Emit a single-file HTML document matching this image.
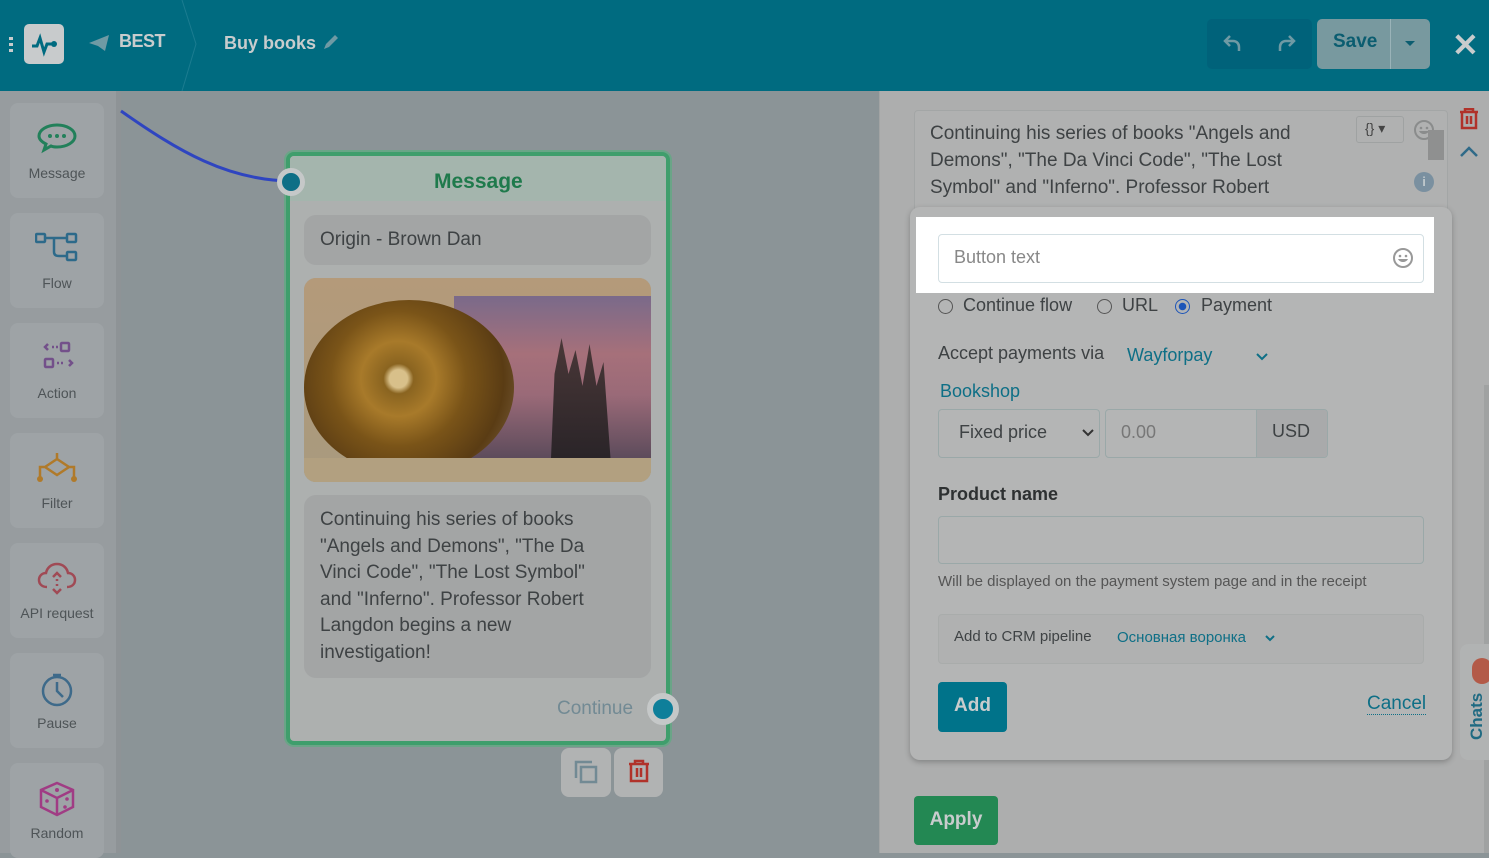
<!DOCTYPE html>
<html><head><meta charset="utf-8"><style>
*{box-sizing:border-box;margin:0;padding:0}
body{width:1489px;height:853px;overflow:hidden;font-family:"Liberation Sans",sans-serif;background:#8b9497;position:relative}
.abs{position:absolute}
.hdr{left:0;top:0;width:1489px;height:91px;background:#006b80}
.side{left:0;top:91px;width:121px;height:762px;background:#979c9f;border-right:5px solid #8e9396}
.item{position:absolute;left:10px;width:94px;height:95px;background:#9ea3a6;border-radius:8px;text-align:center;font-size:14px;color:#4e5457}
.item svg{display:block;margin:18px auto 8px}
.rp{left:879px;top:91px;width:610px;height:762px;background:#adaeae;border-left:1px solid #a2a4a4}
.t{color:#3e4244}
</style></head><body>
<div class="abs hdr"></div>
<div class="abs" style="left:9px;top:37px;width:4px;height:16px;background:repeating-linear-gradient(#c8cccd 0 3px,transparent 3px 6px)"></div>
<div class="abs" style="left:24px;top:24px;width:40px;height:40px;background:#c8cbcc;border-radius:5px"><svg width="40" height="40"><path d="M8 22h5l3-8 4 14 3-8h5" stroke="#006b80" stroke-width="3" fill="none"/><circle cx="30" cy="20" r="3" fill="#006b80"/></svg></div>
<svg class="abs" style="left:88px;top:34px" width="22" height="18"><path d="M1 9L21 1 17 17 10 12z" fill="#6f9aa4"/></svg>
<div class="abs" style="left:119px;top:31px;font-size:18px;font-weight:bold;color:#c8cccd;letter-spacing:-.5px">BEST</div>
<svg class="abs" style="left:180px;top:0" width="20" height="91"><path d="M2 0L16 44 2 91" stroke="#1b7c90" fill="none"/></svg>
<div class="abs" style="left:224px;top:33px;font-size:18px;font-weight:bold;color:#c8cccd">Buy books</div>
<svg class="abs" style="left:321px;top:34px" width="18" height="18"><path d="M3 15l2-5 9-9 3 3-9 9z" fill="#6f9aa4"/></svg>
<div class="abs" style="left:1207px;top:19px;width:105px;height:50px;background:#00627a;border-radius:5px"></div>
<svg class="abs" style="left:1222px;top:32px" width="22" height="22"><path d="M8 4L3 9l5 5M3 9h8c4 0 6 3 6 6v4" stroke="#6f9aa4" stroke-width="2.5" fill="none"/></svg>
<svg class="abs" style="left:1275px;top:32px" width="22" height="22"><path d="M14 4l5 5-5 5M19 9h-8c-4 0-6 3-6 6v4" stroke="#6f9aa4" stroke-width="2.5" fill="none"/></svg>
<div class="abs" style="left:1317px;top:19px;width:113px;height:50px;background:#78999f;border-radius:5px"></div>
<div class="abs" style="left:1390px;top:19px;width:1px;height:50px;background:#9ab3b8"></div>
<div class="abs" style="left:1333px;top:31px;font-size:19px;font-weight:bold;color:#0b5d70">Save</div>
<div class="abs" style="left:1405px;top:41px;border:5px solid transparent;border-top-color:#0b5d70"></div>
<div class="abs" style="left:1452px;top:26px;font-size:32px;font-weight:bold;color:#c8cccd">✕</div>

<div class="abs side">
<div class="item" style="top:12px"><svg width="44" height="36"><path d="M22 4c10 0 18 5 18 11s-8 11-18 11c-2 0-4 0-6-1l-7 4 2-6c-4-2-7-5-7-8C4 9 12 4 22 4z" stroke="#22805a" stroke-width="3" fill="none"/><circle cx="15" cy="15" r="2" fill="#22805a"/><circle cx="22" cy="15" r="2" fill="#22805a"/><circle cx="29" cy="15" r="2" fill="#22805a"/></svg>Message</div>
<div class="item" style="top:122px"><svg width="44" height="36"><g stroke="#2d6a8a" stroke-width="2.5" fill="none"><rect x="1" y="3" width="9" height="8" rx="1"/><rect x="32" y="3" width="9" height="8" rx="1"/><rect x="32" y="21" width="9" height="8" rx="1"/><path d="M10 7h22M19 7v14c0 3 2 4 5 4h8"/></g></svg>Flow</div>
<div class="item" style="top:232px"><svg width="44" height="36"><g stroke="#73508a" stroke-width="2.5" fill="none"><rect x="26" y="2" width="8" height="8" rx="1"/><rect x="10" y="18" width="8" height="8" rx="1"/><path d="M13 3l-3 3 3 3M34 19l3 3-3 3M17 6h2M21 6h2M22 22h2M26 22h2"/></g></svg>Action</div>
<div class="item" style="top:342px"><svg width="44" height="36"><g stroke="#b07a2a" stroke-width="2.5" fill="none"><path d="M22 2v6M22 8L10 16l12 8 12-8zM10 16H5v10M34 16h5v10"/></g><circle cx="5" cy="28" r="3" fill="#b07a2a"/><circle cx="39" cy="28" r="3" fill="#b07a2a"/></svg>Filter</div>
<div class="item" style="top:452px"><svg width="44" height="36"><g stroke="#a04a55" stroke-width="2.5" fill="none"><path d="M12 26c-5 0-8-3-8-7s3-7 7-7c1-5 5-9 11-9s10 4 11 9c4 0 7 3 7 7s-3 7-8 7"/><path d="M18 16l4-4 4 4M18 28l4 4 4-4M22 18v2M22 23v2"/></g></svg>API request</div>
<div class="item" style="top:562px"><svg width="44" height="36"><g stroke="#3e6a8a" stroke-width="2.5" fill="none"><circle cx="22" cy="20" r="14"/><path d="M18 4h8M22 11v9l6 6"/></g></svg>Pause</div>
<div class="item" style="top:672px"><svg width="44" height="36"><g stroke="#a03c84" stroke-width="2.5" fill="none"><path d="M22 2l16 7v17l-16 8-16-8V9zM6 9l16 8 16-8M22 17v17"/></g><circle cx="22" cy="9" r="2" fill="#a03c84"/><circle cx="12" cy="20" r="1.8" fill="#a03c84"/><circle cx="32" cy="18" r="1.8" fill="#a03c84"/><circle cx="30" cy="26" r="1.8" fill="#a03c84"/></svg>Random</div>
</div>

<svg class="abs" style="left:118px;top:91px" width="180" height="100"><path d="M3 20C60 60 110 90 175 90" stroke="#2f45c0" stroke-width="3" fill="none"/></svg>

<!-- node -->
<div class="abs" style="left:286px;top:152px;width:384px;height:593px;border:4px solid #3f9e6c;border-radius:8px;background:#adb0af;box-shadow:0 0 0 2px #6aa587"></div>
<div class="abs" style="left:290px;top:156px;width:376px;height:45px;background:#a4b5ad;border-radius:4px 4px 0 0"></div>
<div class="abs" style="left:434px;top:170px;font-size:21px;font-weight:bold;color:#1f7a4c">Message</div>
<div class="abs" style="left:277px;top:168px;width:28px;height:28px;border-radius:50%;background:#0e6f86;border:5px solid #c5c8c8"></div>
<div class="abs" style="left:304px;top:215px;width:347px;height:50px;background:#a3a5a5;border-radius:12px"></div>
<div class="abs t" style="left:320px;top:229px;font-size:19px">Origin - Brown Dan</div>
<div class="abs" style="left:304px;top:278px;width:347px;height:204px;border-radius:12px;overflow:hidden;background:#a89878">
 <div class="abs" style="left:0;top:0;width:347px;height:204px;background:linear-gradient(180deg,#b49a7a,#a89a7e)"></div>
 <div class="abs" style="left:150px;top:18px;width:197px;height:165px;background:linear-gradient(180deg,#7a6a8a 0%,#a6707a 35%,#9a6a78 60%,#5a4a5a 100%)"></div>
 <div class="abs" style="left:0px;top:22px;width:210px;height:175px;border-radius:50%;background:radial-gradient(circle at 45% 45%,#d8c08a 0 6%,#8a6420 10%,#a87a2a 25%,#7a5418 45%,#5a3c14 70%,#8a7050 100%)"></div>
 <div class="abs" style="left:240px;top:60px;width:70px;height:120px;background:linear-gradient(180deg,#4a3838,#2a2428);clip-path:polygon(10% 100%,15% 30%,25% 0,35% 30%,45% 10%,55% 40%,65% 5%,75% 40%,85% 20%,95% 100%)"></div>
 <div class="abs" style="left:0;top:180px;width:347px;height:24px;background:#b2a080"></div>
</div>
<div class="abs" style="left:304px;top:495px;width:347px;height:183px;background:#a3a5a5;border-radius:12px"></div>
<div class="abs t" style="left:320px;top:507px;width:292px;font-size:19px;line-height:26.5px">Continuing his series of books "Angels and Demons", "The Da Vinci Code", "The Lost Symbol" and "Inferno". Professor Robert Langdon begins a new investigation!</div>
<div class="abs" style="left:557px;top:698px;font-size:19px;color:#728a94">Continue</div>
<div class="abs" style="left:647px;top:693px;width:32px;height:32px;border-radius:50%;background:#0e7f9a;border:6px solid #c5c8c8"></div>
<div class="abs" style="left:561px;top:748px;width:50px;height:49px;background:#b1b3b3;border-radius:8px"></div>
<svg class="abs" style="left:574px;top:760px" width="24" height="24"><g stroke="#728a94" stroke-width="2.5" fill="none"><path d="M2 18V2h16"/><rect x="7" y="7" width="15" height="15"/></g></svg>
<div class="abs" style="left:614px;top:748px;width:49px;height:49px;background:#b1b3b3;border-radius:8px"></div>
<svg class="abs" style="left:627px;top:759px" width="24" height="24"><g stroke="#b0322a" stroke-width="2.5" fill="none"><path d="M2 5h20M8 5V2h8v3M4 5v17h16V5M10 9v9M14 9v9"/></g></svg>

<!-- right panel -->
<div class="abs rp"></div>
<div class="abs" style="left:914px;top:110px;width:534px;height:110px;border:1px solid #a3a6a6;border-radius:4px;background:#b0b1b1"></div>
<div class="abs t" style="left:930px;top:120px;width:380px;font-size:19px;line-height:27px">Continuing his series of books "Angels and Demons", "The Da Vinci Code", "The Lost Symbol" and "Inferno". Professor Robert</div>
<div class="abs" style="left:1356px;top:116px;width:48px;height:27px;border:1px solid #9fa2a2;border-radius:3px;font-size:14px;color:#444;padding:3px 0 0 8px">{} ▾</div>
<svg class="abs" style="left:1413px;top:119px" width="22" height="22"><circle cx="11" cy="11" r="9" stroke="#8a8c8c" stroke-width="2" fill="none"/><circle cx="8" cy="9" r="1.3" fill="#8a8c8c"/><circle cx="14" cy="9" r="1.3" fill="#8a8c8c"/><path d="M6 12c2 4 8 4 10 0z" fill="#8a8c8c"/></svg>
<div class="abs" style="left:1414px;top:172px;width:20px;height:20px;border-radius:50%;background:#7a90a0;color:#c0c8cc;font-size:13px;font-weight:bold;text-align:center;line-height:20px">i</div>
<div class="abs" style="left:1428px;top:130px;width:16px;height:30px;background:#8f9090"></div>
<svg class="abs" style="left:1459px;top:108px" width="20" height="22"><g stroke="#b0322a" stroke-width="2.5" fill="none"><path d="M1 4h18M6 4V1h8v3M3 4v16h14V4M8 8v8M12 8v8"/></g></svg>
<svg class="abs" style="left:1460px;top:146px" width="18" height="12"><path d="M1 10l8-8 8 8" stroke="#2f6a88" stroke-width="2.5" fill="none"/></svg>
<div class="abs" style="left:1484px;top:385px;width:5px;height:468px;background:#a0a2a2"></div>

<div class="abs" style="left:910px;top:207px;width:542px;height:553px;background:#b4b5b5;border-radius:10px;box-shadow:0 2px 6px rgba(0,0,0,.25)"></div>
<div class="abs" style="left:916px;top:217px;width:518px;height:76px;background:#fff"></div>
<div class="abs" style="left:938px;top:234px;width:486px;height:49px;border:1px solid #d3dfe3;border-radius:4px"></div>
<div class="abs" style="left:954px;top:247px;font-size:18px;color:#888">Button text</div>
<svg class="abs" style="left:1392px;top:247px" width="22" height="22"><circle cx="11" cy="11" r="9" stroke="#999" stroke-width="2" fill="none"/><circle cx="8" cy="9" r="1.3" fill="#999"/><circle cx="14" cy="9" r="1.3" fill="#999"/><path d="M6 12c2 4 8 4 10 0z" fill="#999"/></svg>

<div class="abs" style="left:938px;top:299px;width:15px;height:15px;border-radius:50%;border:1.5px solid #555"></div>
<div class="abs t" style="left:963px;top:295px;font-size:18px">Continue flow</div>
<div class="abs" style="left:1097px;top:299px;width:15px;height:15px;border-radius:50%;border:1.5px solid #555"></div>
<div class="abs t" style="left:1122px;top:295px;font-size:18px">URL</div>
<div class="abs" style="left:1175px;top:299px;width:15px;height:15px;border-radius:50%;border:1.5px solid #1d55b8;background:radial-gradient(#1d55b8 0 3.5px,transparent 4px)"></div>
<div class="abs t" style="left:1201px;top:295px;font-size:18px">Payment</div>

<div class="abs t" style="left:938px;top:343px;font-size:18px">Accept payments via</div>
<div class="abs" style="left:1127px;top:345px;font-size:18px;color:#0e6f86">Wayforpay</div>
<svg class="abs" style="left:1255px;top:352px" width="14" height="10"><path d="M2 2l5 5 5-5" stroke="#0e6f86" stroke-width="2" fill="none"/></svg>
<div class="abs" style="left:940px;top:381px;font-size:18px;color:#0e6f86">Bookshop</div>

<div class="abs" style="left:938px;top:409px;width:162px;height:49px;border:1px solid #9aa8a8;border-radius:4px"></div>
<div class="abs t" style="left:959px;top:422px;font-size:18px">Fixed price</div>
<svg class="abs" style="left:1081px;top:428px" width="14" height="10"><path d="M2 2l5 5 5-5" stroke="#333" stroke-width="2" fill="none"/></svg>
<div class="abs" style="left:1105px;top:409px;width:223px;height:49px;border:1px solid #9aa8a8;border-radius:4px"></div>
<div class="abs" style="left:1256px;top:410px;width:71px;height:47px;background:#a9aaab;border-left:1px solid #9aa8a8;border-radius:0 3px 3px 0"></div>
<div class="abs" style="left:1121px;top:422px;font-size:18px;color:#777">0.00</div>
<div class="abs t" style="left:1272px;top:421px;font-size:18px">USD</div>

<div class="abs" style="left:938px;top:484px;font-size:18px;font-weight:bold;color:#2e3132">Product name</div>
<div class="abs" style="left:938px;top:516px;width:486px;height:48px;border:1px solid #9aa8a8;border-radius:4px"></div>
<div class="abs" style="left:938px;top:573px;font-size:15px;color:#555">Will be displayed on the payment system page and in the receipt</div>

<div class="abs" style="left:938px;top:614px;width:486px;height:50px;border:1px solid #a9acab;border-radius:4px;background:#b0b1b1"></div>
<div class="abs t" style="left:954px;top:628px;font-size:15px">Add to CRM pipeline</div>
<div class="abs" style="left:1117px;top:629px;font-size:15px;color:#0e6f86">Основная воронка</div>
<svg class="abs" style="left:1264px;top:634px" width="12" height="9"><path d="M2 2l4 4 4-4" stroke="#0e6f86" stroke-width="2" fill="none"/></svg>

<div class="abs" style="left:938px;top:682px;width:69px;height:50px;background:#00738a;border-radius:4px;color:#c8cccd;font-size:19px;font-weight:bold;text-align:center;line-height:48px">Add</div>
<div class="abs" style="left:1367px;top:694px;font-size:19px;color:#0e6f86;border-bottom:1px dotted #0e6f86;line-height:20px">Cancel</div>

<div class="abs" style="left:914px;top:796px;width:84px;height:49px;background:#238853;border-radius:4px;color:#c8cccd;font-size:19px;font-weight:bold;text-align:center;line-height:47px">Apply</div>

<div class="abs" style="left:1460px;top:644px;width:29px;height:116px;background:#b1b3b3;border-radius:8px 0 0 8px"></div>
<div class="abs" style="left:1472px;top:658px;width:20px;height:26px;border-radius:13px;background:#b35a48"></div>
<div class="abs" style="left:1467px;top:740px;transform:rotate(-90deg);transform-origin:0 0;font-size:17px;font-weight:bold;color:#1f6a82">Chats</div>
</body></html>
